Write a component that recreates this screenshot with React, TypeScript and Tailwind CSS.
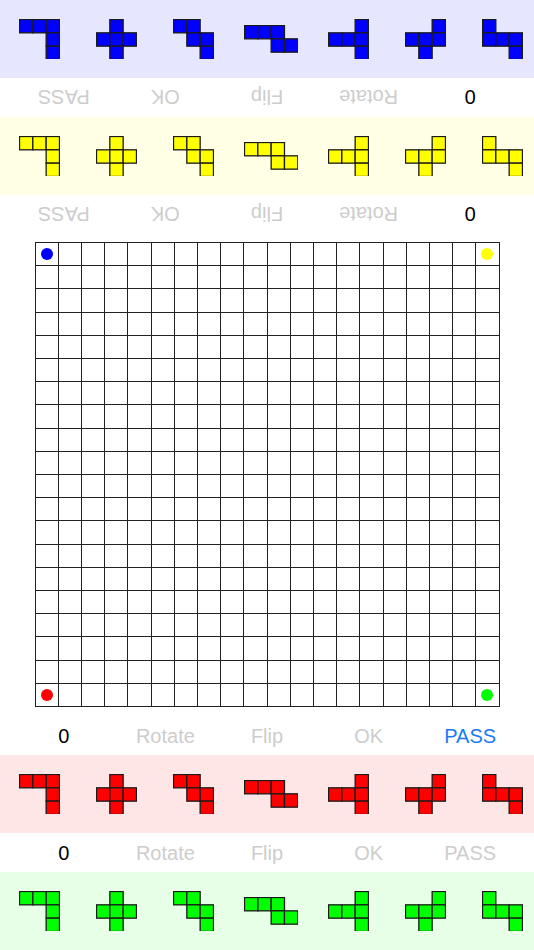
import React from "react";

type Cell = [number, number];

const SHAPES: Cell[][] = [
  [[0, 0], [1, 0], [2, 0], [2, 1], [2, 2]],
  [[1, 0], [0, 1], [1, 1], [2, 1], [1, 2]],
  [[0, 0], [1, 0], [1, 1], [2, 1], [2, 2]],
  [[0, 0], [1, 0], [2, 0], [2, 1], [3, 1]],
  [[2, 0], [0, 1], [1, 1], [2, 1], [2, 2]],
  [[2, 0], [0, 1], [1, 1], [2, 1], [1, 2]],
  [[0, 0], [0, 1], [1, 1], [2, 1], [2, 2]],
];

const C = 13.33;

function Piece({ cells, color }: { cells: Cell[]; color: string }) {
  const w = Math.max(...cells.map((c) => c[0])) + 1;
  const h = Math.max(...cells.map((c) => c[1])) + 1;
  return (
    <svg width={w * C + 1} height={h * C + 1} viewBox={`-0.5 -0.5 ${w * C + 1} ${h * C + 1}`}>
      {cells.map(([x, y], i) => (
        <rect
          key={i}
          x={x * C}
          y={y * C}
          width={C}
          height={C}
          fill={color}
          stroke="#1a1a1a"
          strokeWidth={1.3}
        />
      ))}
    </svg>
  );
}

function Band({ bg, color }: { bg: string; color: string }) {
  return (
    <div className={`h-[78px] w-full overflow-hidden flex items-center ${bg}`}>
      <div className="flex items-center pl-[0.5px]">
        {SHAPES.map((s, i) => (
          <div key={i} className="w-[77.25px] shrink-0 flex items-center justify-center">
            <Piece cells={s} color={color} />
          </div>
        ))}
      </div>
    </div>
  );
}

function Controls({ flipped, passActive }: { flipped?: boolean; passActive?: boolean }) {
  return (
    <div
      className={`h-[39px] w-full bg-white px-[13px] grid grid-cols-5 items-center text-[20px] ${
        flipped ? "rotate-180" : ""
      }`}
      style={{ fontFamily: '"Liberation Sans", Arial, sans-serif' }}
    >
      <div className="text-center text-black">0</div>
      <div className="text-center text-[#cdcdcd]">Rotate</div>
      <div className="text-center text-[#cdcdcd]">Flip</div>
      <div className="text-center text-[#cdcdcd]">OK</div>
      <div className={`text-center ${passActive ? "text-[#1a7cf5]" : "text-[#cdcdcd]"}`}>PASS</div>
    </div>
  );
}

function Board() {
  const cells = [];
  for (let r = 0; r < 20; r++) {
    for (let c = 0; c < 20; c++) {
      let dot: string | null = null;
      if (r === 0 && c === 0) dot = "bg-[#0000ff]";
      if (r === 0 && c === 19) dot = "bg-[#ffff00]";
      if (r === 19 && c === 0) dot = "bg-[#ff0000]";
      if (r === 19 && c === 19) dot = "bg-[#00ff00]";
      cells.push(
        <div
          key={`${r}-${c}`}
          className="border-r border-b border-[#222222] flex items-center justify-center"
        >
          {dot && <div className={`w-[12px] h-[12px] rounded-full ${dot}`} />}
        </div>
      );
    }
  }
  return (
    <div className="w-[465px] h-[465px] border-l border-t border-[#222222] grid grid-cols-[repeat(20,1fr)] grid-rows-[repeat(20,1fr)]">
      {cells}
    </div>
  );
}

export default function App() {
  return (
    <div className="w-[534px] h-[950px] bg-white overflow-hidden flex flex-col">
      <Band bg="bg-[#e6e6ff]" color="#0000ff" />
      <Controls flipped />
      <Band bg="bg-[#ffffe6]" color="#ffff00" />
      <Controls flipped />
      <div className="h-[482px] flex justify-center pt-[8px]">
        <Board />
      </div>
      <Controls passActive />
      <Band bg="bg-[#ffe6e6]" color="#ff0000" />
      <Controls />
      <Band bg="bg-[#e6ffe6]" color="#00ff00" />
    </div>
  );
}
